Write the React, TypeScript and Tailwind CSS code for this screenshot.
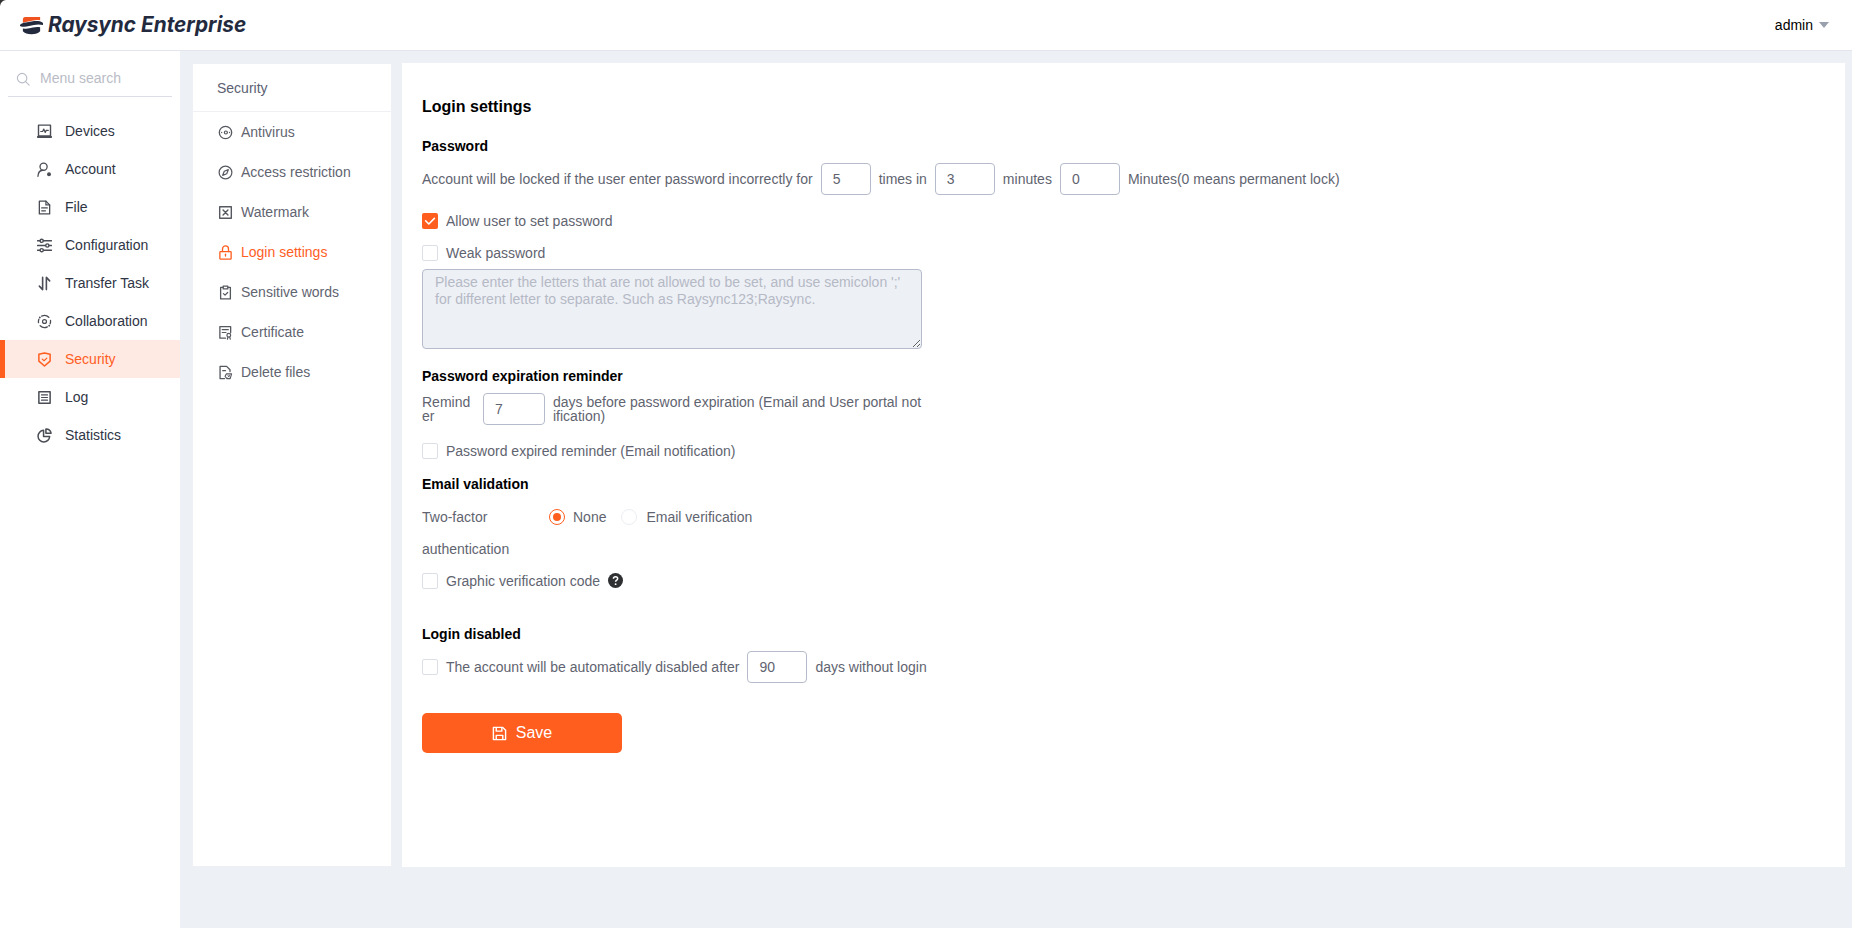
import React from "react";

const S = ({ children, className = "" }: { children: React.ReactNode; className?: string }) => (
  <svg viewBox="0 0 16 16" fill="none" stroke="currentColor" strokeWidth={1.3} strokeLinecap="round" strokeLinejoin="round" className={`w-[15px] h-[15px] shrink-0 ${className}`}>
    {children}
  </svg>
);

const Devices = () => (
  <S><rect x="1.6" y="1.2" width="12.8" height="11.6" strokeWidth={1.5} /><path d="M4 8h2l1.2-2.6L8.8 9l1-2.2H12" /><path d="M.8 13.8h14.4" strokeWidth={2} /></S>
);
const Account = () => (
  <S><circle cx="7" cy="5" r="3.8" strokeWidth={1.4} /><path d="M1 15.2c.2-3.6 2.4-6.2 5-6.4" strokeWidth={1.4} /><circle cx="12.8" cy="13" r="2.1" fill="currentColor" stroke="none" /></S>
);
const FileIcon = () => (
  <S><path d="M2.5 1.2h7l4 4v9.6h-11z" strokeWidth={1.4} /><path d="M9.5 1.2v4h4" /><path d="M5 8.5h6M5 11.5h4" /></S>
);
const Config = () => (
  <S><path d="M.6 3h14.8M.6 8h14.8M.6 13h14.8" strokeWidth={1.5} /><circle cx="5" cy="3" r="1.7" fill="#fff" strokeWidth={1.5} /><circle cx="11" cy="8" r="1.7" fill="#fff" strokeWidth={1.5} /><circle cx="5" cy="13" r="1.7" fill="#fff" strokeWidth={1.5} /></S>
);
const Transfer = () => (
  <S><path d="M6 1.5v13L2.5 10.8" strokeWidth={1.7} /><path d="M10 14.5v-13l3.5 3.7" strokeWidth={1.7} /></S>
);
const Collab = () => (
  <S><circle cx="8" cy="8" r="2.1" /><path d="M12.6 3.4A6.5 6.5 0 0 0 5 2.3" strokeWidth={1.4} /><path d="M3.4 12.6A6.5 6.5 0 0 0 11 13.7" strokeWidth={1.4} /><path d="M1.6 9.2A6.5 6.5 0 0 1 2 5.5M14.4 6.8A6.5 6.5 0 0 1 14 10.5" strokeWidth={1.4} /><circle cx="3" cy="3.6" r="1" fill="currentColor" stroke="none" /><circle cx="13" cy="12.4" r="1" fill="currentColor" stroke="none" /></S>
);
const Shield = () => (
  <S><path d="M2 2.5 8 1l6 1.5v7.2L8 15l-6-5.3z" strokeWidth={1.6} /><path d="M5.6 7.6 7.5 9.3l3-2.8" /></S>
);
const Log = () => (
  <S><rect x="2" y="1.8" width="12" height="12.4" strokeWidth={1.6} /><path d="M4.8 5.2h6.4M4.8 8h6.4M4.8 10.8h6.4" /></S>
);
const Stats = () => (
  <S><path d="M7 2.5A6.2 6.2 0 1 0 13.5 9H7z" strokeWidth={1.6} /><path d="M9.5 1v4.5H15A5.5 5.5 0 0 0 9.5 1z" strokeWidth={1.6} /></S>
);
const Antivirus = () => (
  <S><circle cx="8" cy="8" r="6.6" strokeWidth={1.4} /><circle cx="8.4" cy="8" r="1.6" /><circle cx="3.9" cy="8" r=".7" fill="currentColor" stroke="none" /><circle cx="12.3" cy="8" r=".7" fill="currentColor" stroke="none" /></S>
);
const Compass = () => (
  <S><circle cx="8" cy="8" r="6.8" /><path d="M11 5 9.3 9.3 5 11l1.7-4.3z" /></S>
);
const Watermark = () => (
  <S><rect x="1.8" y="1.8" width="12.4" height="12.4" strokeWidth={1.5} /><path d="M5.4 5.4l5.2 5.2M10.6 5.4l-5.2 5.2" strokeWidth={1.5} /></S>
);
const Lock = () => (
  <S><rect x="2" y="7" width="12" height="8" rx=".6" strokeWidth={1.4} /><path d="M4.8 7V4.2a3.2 3.2 0 0 1 6.4 0V7" strokeWidth={1.4} /><path d="M8 9.8v2" strokeWidth={1.4} /></S>
);
const Clipboard = () => (
  <S><path d="M5.5 2.5H2.8v12.3h10.4V2.5h-2.7" strokeWidth={1.4} /><rect x="5.5" y="1.2" width="5" height="3" /><path d="M5.8 9.2 7.5 10.8l2.8-2.8" /></S>
);
const Cert = () => (
  <S><path d="M8 14H2V1.8h11.5V8" strokeWidth={1.4} /><path d="M4.5 5h6.5M4.5 8h4" /><circle cx="11.5" cy="11" r="2" strokeWidth={1.3} /><path d="M10.5 13l-.4 2M12.5 13l.6 2" /></S>
);
const Del = () => (
  <S><path d="M7 14.5H2.2V1.5h7l3.6 3.6V7" strokeWidth={1.4} /><path d="M5 6h3" /><path d="M9 9.5h5.5l-1.5 5H9.5L7.5 12z" strokeWidth={1.2} /><path d="M10.5 11l2 2M12.5 11l-2 2" strokeWidth={.9} /></S>
);

const menu = [
  ["Devices", Devices],
  ["Account", Account],
  ["File", FileIcon],
  ["Configuration", Config],
  ["Transfer Task", Transfer],
  ["Collaboration", Collab],
  ["Security", Shield],
  ["Log", Log],
  ["Statistics", Stats],
] as const;

const sub = [
  ["Antivirus", Antivirus],
  ["Access restriction", Compass],
  ["Watermark", Watermark],
  ["Login settings", Lock],
  ["Sensitive words", Clipboard],
  ["Certificate", Cert],
  ["Delete files", Del],
] as const;

const Box = ({ checked = false }: { checked?: boolean }) =>
  checked ? (
    <span className="w-4 h-4 rounded-[2px] bg-[#ff5e1f] flex items-center justify-center shrink-0">
      <svg viewBox="0 0 16 16" className="w-4 h-4" fill="none" stroke="#fff" strokeWidth={1.6} strokeLinecap="round" strokeLinejoin="round"><path d="M3.6 7.8 6.8 11l5.6-5.6" /></svg>
    </span>
  ) : (
    <span className="w-4 h-4 rounded-[2px] border border-[#dcdfe6] bg-white shrink-0" />
  );

const Num = ({ value, w, className = "" }: { value: string; w: string; className?: string }) => (
  <input readOnly defaultValue={value} className={`${w} ${className} h-8 border border-[#b5bbca] rounded-[4px] pl-[11px] text-[14px] text-[#5f6470] bg-white outline-none shrink-0`} />
);

const Title = ({ children, className = "" }: { children: React.ReactNode; className?: string }) => (
  <div className={`h-5 leading-5 text-[14px] font-bold text-black ${className}`}>{children}</div>
);

export default function App() {
  return (
    <div className="relative w-full h-[928px] flex flex-col overflow-hidden bg-[#edf0f5] font-['Liberation_Sans',Arial,sans-serif] text-[14px]">
      <svg viewBox="0 0 6 6" className="absolute top-0 left-0 w-[6px] h-[6px]"><path d="M0 0h6C3 .4 .6 2.4 0 6z" fill="#333" /></svg>
      <header className="h-[51px] shrink-0 bg-white border-b border-[#e3e5ec] flex items-center justify-between pl-[20px] pr-[23px]">
        <div className="flex items-center gap-[5px]">
          <svg viewBox="0 0 24 20" className="w-[23px] h-[21px] shrink-0">
            <path d="M3 7.2V3.4C3 1.6 4.4 1 6.5 1H21v3.6c-2.8-.8-5.5-.4-8.5.4C9 5.9 5.5 6 3 7.2z" fill="#f0531f" />
            <path d="M0 9.6C.4 8.2 3 7 6 6.8c3-.2 6-1 9-1.4 3.5-.4 8 .2 9 2v2.2c-3-1-6.5-1-9.5-.1C11 10.4 7 11.4 3.5 11.2 1.8 11.100.6 10.800 0 10.400z" fill="#232a3e" />
            <path d="M3 13c3.2.8 7 .3 10.5-.8 2.8-.9 5.500-.9 7.500-.3V16c-1.500 2-5 3.200-9 3.200S4.500 18 3 16z" fill="#232a3e" />
          </svg>
          <span className="font-['Inter',sans-serif] italic font-bold text-[20.800px] leading-none text-[#232a3e]">Raysync Enterprise</span>
        </div>
        <div className="flex items-center gap-[6px] text-black text-[14px]">
          <span>admin</span>
          <svg viewBox="0 0 10 6" className="w-[10px] h-[6px]"><path d="M0 0h10L5 6z" fill="#9aa0ad" /></svg>
        </div>
      </header>

      <div className="flex flex-1 min-h-0">
        <aside className="w-[180px] shrink-0 bg-white">
          <div className="mx-[8px] h-[46px] pt-[10px] border-b border-[#dcdee6] flex items-center pl-[8px] gap-[10px] text-[#b9bcc6]">
            <svg viewBox="0 0 16 16" fill="none" stroke="#b9bcc6" strokeWidth={1.3} strokeLinecap="round" className="w-[14px] h-[14px]"><circle cx="7" cy="7" r="5.4" /><path d="m11 11 4 4" /></svg>
            <span>Menu search</span>
          </div>
          <nav className="mt-[15px]">
            {menu.map(([label, Icon]) => {
              const active = label === "Security";
              return (
                <div key={label} className={`h-[38px] flex items-center gap-[13px] ${active ? "bg-[#ffe9e3] text-[#ff5e1f] border-l-[5px] border-[#ff5e1f] pl-[32px]" : "pl-[37px] text-[#2f3545]"}`}>
                  <span className={active ? "text-[#ff5e1f]" : "text-[#4a4d55]"}><Icon /></span>
                  <span>{label}</span>
                </div>
              );
            })}
          </nav>
        </aside>

        <section className="w-[198px] shrink-0 ml-[13px] mt-[13px] h-[802px] bg-white">
          <div className="h-[48px] border-b border-[#eef0f4] pl-[24px] pt-[2px] flex items-center text-[#5b6172]">Security</div>
          <div>
            {sub.map(([label, Icon]) => {
              const active = label === "Login settings";
              return (
                <div key={label} className={`h-10 flex items-center pl-[25px] gap-[8px] ${active ? "text-[#ff5e1f]" : "text-[#5f6470]"}`}>
                  <span className={active ? "text-[#ff5e1f]" : "text-[#55585f]"}><Icon /></span>
                  <span>{label}</span>
                </div>
              );
            })}
          </div>
        </section>

        <main className="w-[1443px] shrink-0 ml-[11px] mt-[12px] h-[804px] bg-white pl-[20px] pt-[34px] text-[#5f6470]">
          <div className="h-5 leading-5 text-[16px] font-bold text-black">Login settings</div>
          <Title className="mt-[19px]">Password</Title>
          <div className="mt-[7px] h-8 flex items-center">
            <span>Account will be locked if the user enter password incorrectly for</span>
            <Num value="5" w="w-[50px]" className="ml-2" />
            <span className="ml-2">times in</span>
            <Num value="3" w="w-[60px]" className="ml-2" />
            <span className="ml-2">minutes</span>
            <Num value="0" w="w-[60px]" className="ml-2" />
            <span className="ml-2">Minutes(0 means permanent lock)</span>
          </div>
          <label className="mt-[18px] h-4 flex items-center gap-2"><Box checked /><span>Allow user to set password</span></label>
          <label className="mt-4 h-4 flex items-center gap-2"><Box /><span>Weak password</span></label>
          <textarea
            disabled
            placeholder="Please enter the letters that are not allowed to be set, and use semicolon ';' for different letter to separate. Such as Raysync123;Raysync."
            className="block mt-2 w-[500px] h-20 border border-[#b5bbca] rounded-[4px] bg-[#edf0f5] px-3 py-1 text-[14px] leading-[17px] placeholder:text-[#b5b9c5] outline-none"
          />
          <Title className="mt-[17px]">Password expiration reminder</Title>
          <div className="mt-[7px] h-8 w-[500px] flex items-center">
            <span className="w-[49px] break-all leading-[14px] shrink-0">Reminder</span>
            <Num value="7" w="w-[62px]" className="ml-[12px]" />
            <span className="ml-2 break-all leading-[14px]">days before password expiration (Email and User portal notification)</span>
          </div>
          <label className="mt-[18px] h-4 flex items-center gap-2"><Box /><span>Password expired reminder (Email notification)</span></label>
          <Title className="mt-[15px]">Email validation</Title>
          <div className="mt-[7px] flex items-start">
            <span className="w-[127px] leading-[32px]">Two-factor authentication</span>
            <div className="h-8 flex items-center">
              <span className="w-4 h-4 rounded-full border border-[#ff5e1f] flex items-center justify-center"><span className="w-2 h-2 rounded-full bg-[#ff5e1f]" /></span>
              <span className="ml-2">None</span>
              <span className="ml-[15px] w-4 h-4 rounded-full border border-[#eceef2]" />
              <span className="ml-[9px]">Email verification</span>
            </div>
          </div>
          <div className="mt-2 h-4 flex items-center gap-2">
            <Box /><span>Graphic verification code</span>
            <svg viewBox="0 0 16 16" className="w-[15px] h-[15px] -mt-[2px]"><circle cx="8" cy="8" r="8" fill="#2f3032" /><path d="M5.8 6.2c0-1.3 1-2.1 2.3-2.1s2.2.8 2.2 1.9c0 1.7-2.2 1.6-2.2 3.4" fill="none" stroke="#fff" strokeWidth="1.6" /><circle cx="8.1" cy="11.9" r="1" fill="#fff" /></svg>
          </div>
          <Title className="mt-[35px]">Login disabled</Title>
          <div className="mt-[7px] h-8 flex items-center">
            <Box />
            <span className="ml-2">The account will be automatically disabled after</span>
            <Num value="90" w="w-[60px]" className="ml-2" />
            <span className="ml-2">days without login</span>
          </div>
          <button className="mt-[30px] w-[200px] h-10 rounded-[5px] bg-[#ff5e1f] text-white text-[16px] flex items-center justify-center gap-[9px]">
            <svg viewBox="0 0 16 16" fill="none" stroke="#fff" strokeWidth={1.5} strokeLinejoin="round" className="w-[15px] h-[15px]"><path d="M1.5 1.5h10l3 3v10h-13z" /><path d="M4.5 1.5v4h6v-4" /><path d="M4.5 14.5V10h7v4.5" /></svg>
            <span>Save</span>
          </button>
        </main>
      </div>
    </div>
  );
}
